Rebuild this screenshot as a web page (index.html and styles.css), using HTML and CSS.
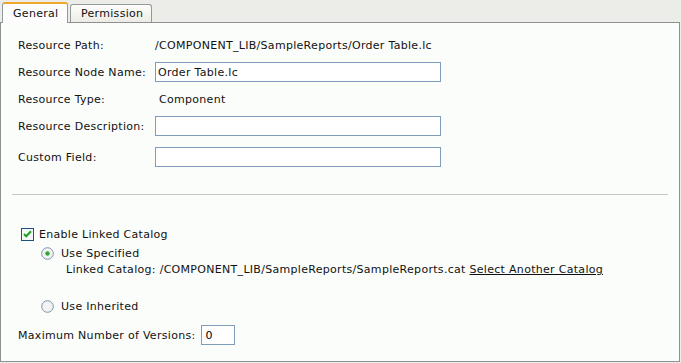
FILE: index.html
```html
<!DOCTYPE html>
<html lang="en">
<head>
    <meta charset="UTF-8">
    <title>Resource Properties</title>
    <link rel="stylesheet" href="styles.css">
</head>
<body>
    <div class="tabs">
        <div class="tab active">General</div>
        <div class="tab">Permission</div>
    </div>
    <div class="panel">
        <div class="fields">
            <div class="row">
                <span class="label">Resource Path:</span>
                <span class="value">/COMPONENT_LIB/SampleReports/Order Table.lc</span>
            </div>
            <div class="row">
                <span class="label">Resource Node Name:</span>
                <input class="text-input" type="text" value="Order Table.lc">
            </div>
            <div class="row">
                <span class="label">Resource Type:</span>
                <span class="value type">Component</span>
            </div>
            <div class="row">
                <span class="label">Resource Description:</span>
                <input class="text-input" type="text" value="">
            </div>
            <div class="row last">
                <span class="label">Custom Field:</span>
                <input class="text-input" type="text" value="">
            </div>
        </div>

        <hr class="separator">

        <!-- linked catalog options -->
        <div class="catalog">
            <div class="check-row">
                <svg class="checkbox" width="13" height="13" viewBox="0 0 13 13">
                    <rect x="0.5" y="0.5" width="12" height="12" fill="#f4f6f8" stroke="#1c5180"/>
                    <path d="M3 6 L5.2 8.3 L10 3.3" fill="none" stroke="#21a121" stroke-width="2"/>
                </svg>
                <span>Enable Linked Catalog</span>
            </div>
            <div class="radio-row specified">
                <svg class="radio" width="13" height="13" viewBox="0 0 13 13">
                    <circle cx="6.5" cy="6.5" r="5.8" fill="#f3f4f2" stroke="#7b93ad"/>
                    <circle cx="6.5" cy="6.5" r="2.2" fill="#33a533"/>
                </svg>
                <span>Use Specified</span>
            </div>
            <div class="linked">
                Linked Catalog: /COMPONENT_LIB/SampleReports/SampleReports.cat <a href="#">Select Another Catalog</a>
            </div>
            <div class="radio-row inherited">
                <svg class="radio" width="13" height="13" viewBox="0 0 13 13">
                    <circle cx="6.5" cy="6.5" r="5.8" fill="#f3f4f2" stroke="#7b93ad"/>
                </svg>
                <span>Use Inherited</span>
            </div>
            <div class="versions">
                <span>Maximum Number of Versions:</span>
                <input class="small-input" type="text" value="0">
            </div>
        </div>
    </div>
</body>
</html>
```

FILE: styles.css
```css
body {
    font-family: "DejaVu Sans", Verdana, sans-serif;
    font-size: 11px;
    letter-spacing: 0.3px;
    color: #111;
    background-color: #ecece9;
    margin: 0;
    padding: 0;
}
.tabs {
    display: flex;
    align-items: flex-end;
    height: 22px;
    padding-left: 2px;
    gap: 2px;
    box-sizing: border-box;
}
.tab {
    height: 18px;
    width: 82px;
    box-sizing: border-box;
    padding-left: 10px;
    line-height: 17px;
    border: 1px solid #919b9c;
    border-bottom: none;
    border-radius: 3px 3px 0 0;
    background: linear-gradient(#fdfdfc, #ecebe5);
}
.tab.active {
    width: 66px;
    height: 21px;
    margin-bottom: -1px;
    padding-top: 2px;
    border-top: 2px solid #f0a52b;
    background: #fcfdfc;
    position: relative;
    line-height: 16px;
}
.panel {
    height: 340px;
    box-sizing: border-box;
    width: 680px;
    background-color: #fbfdfb;
    border: 1px solid #8f9090;
}
.fields {
    padding: 12px 0 0 17px;
}
.row {
    display: flex;
    align-items: center;
    height: 20px;
    margin-bottom: 7px;
}
.row.last {
    margin-top: 11px;
    margin-bottom: 0;
}
.label {
    width: 137px;
}
.value.type {
    padding-left: 4px;
}
.text-input {
    width: 286px;
    height: 20px;
    box-sizing: border-box;
    border: 1px solid #7f9db9;
    background: #fff;
    font-family: inherit;
    font-size: 11px;
    letter-spacing: 0.3px;
    padding: 0 2px;
    color: #111;
    margin: 0;
}
.separator {
    border: none;
    border-top: 1px solid #c3c7c7;
    margin: 27px 11px 0 11px;
}
.catalog {
    padding-left: 17px;
}
.check-row {
    display: flex;
    align-items: center;
    gap: 5px;
    margin-top: 32px;
    padding-left: 3px;
    height: 14px;
}
.radio-row {
    display: flex;
    align-items: center;
    gap: 7px;
    padding-left: 23px;
    height: 14px;
}
.radio-row.specified {
    margin-top: 5px;
}
.linked {
    padding-left: 48px;
    margin-top: 3px;
    height: 14px;
    line-height: 14px;
}
.linked a {
    color: #111;
    text-decoration: underline;
}
.radio-row.inherited {
    margin-top: 22px;
}
.versions {
    display: flex;
    align-items: center;
    gap: 6px;
    margin-top: 12px;
}
.small-input {
    width: 34px;
    height: 20px;
    box-sizing: border-box;
    border: 1px solid #7f9db9;
    background: #fff;
    font-family: inherit;
    font-size: 11px;
    letter-spacing: 0.3px;
    padding: 0 3px;
    margin: 0;
}
```
